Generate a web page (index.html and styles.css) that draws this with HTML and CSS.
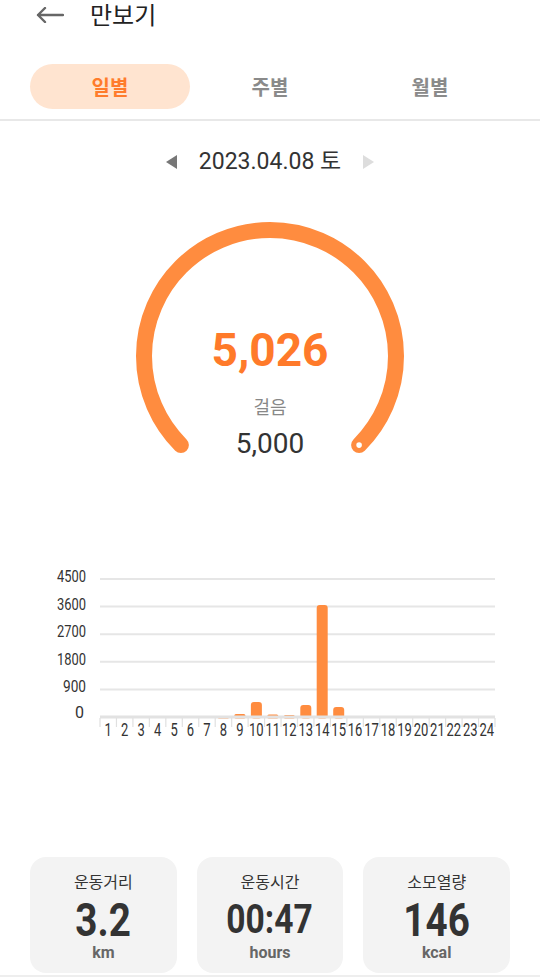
FILE: index.html
```html
<!DOCTYPE html>
<html lang="ko">
<head>
    <meta charset="UTF-8">
    <meta name="viewport" content="width=device-width, initial-scale=1.0">
    <title>만보기</title>
    <link rel="stylesheet" href="styles.css">
</head>
<body>
    <div class="header">
        <svg class="backIcon" width="28" height="16" viewBox="0 0 28 16">
            <path d="M27 8 H2 M9 1 L2 8 L9 15" fill="none" stroke="#666" stroke-width="2.4" stroke-linecap="round" stroke-linejoin="round"/>
        </svg>
        <div class="headerTitle">만보기</div>
    </div>

    <div class="tabBar">
        <div class="tab active">일별</div>
        <div class="tab">주별</div>
        <div class="tab">월별</div>
    </div>

    <div class="dateRow">
        <svg class="arrow" width="12" height="14" viewBox="0 0 12 14"><path d="M11 0 L0 7 L11 14 Z" fill="#777"/></svg>
        <div class="dateText">2023.04.08 토</div>
        <svg class="arrow" width="12" height="14" viewBox="0 0 12 14"><path d="M1 0 L12 7 L1 14 Z" fill="#ddd"/></svg>
    </div>

    <div class="gauge">
        <svg class="gaugeRing" width="280" height="240" viewBox="0 0 280 240">
            <path d="M50.9 231.1 A126 126 0 1 1 229.1 231.1" fill="none" stroke="#FF8C3F" stroke-width="16" stroke-linecap="round"/>
            <circle cx="229.1" cy="231.1" r="2.8" fill="#fff"/>
        </svg>
        <div class="gaugeValue">5,026</div>
        <div class="gaugeLabel">걸음</div>
        <div class="gaugeGoal">5,000</div>
    </div>

    <svg class="chart" width="540" height="180" viewBox="0 560 540 180">
        <!-- grid lines -->
        <g stroke="#e6e6e6" stroke-width="2">
            <line x1="100" y1="579" x2="495" y2="579"/>
            <line x1="100" y1="606.6" x2="495" y2="606.6"/>
            <line x1="100" y1="634.2" x2="495" y2="634.2"/>
            <line x1="100" y1="661.8" x2="495" y2="661.8"/>
            <line x1="100" y1="689.4" x2="495" y2="689.4"/>
        </g>
        <!-- y labels -->
        <g class="axisText" text-anchor="end" font-size="16">
            <text x="86" y="582" textLength="29" lengthAdjust="spacingAndGlyphs">4500</text>
            <text x="86" y="609.6" textLength="29" lengthAdjust="spacingAndGlyphs">3600</text>
            <text x="86" y="637.2" textLength="29" lengthAdjust="spacingAndGlyphs">2700</text>
            <text x="86" y="664.8" textLength="29" lengthAdjust="spacingAndGlyphs">1800</text>
            <text x="86" y="692.4" textLength="23" lengthAdjust="spacingAndGlyphs">900</text>
            <text x="84" y="718">0</text>
        </g>
        <!-- bars -->
        <g fill="#FF8C3F">
            <rect x="217.9" y="716" width="11" height="2.5" rx="1"/>
            <rect x="234.4" y="714" width="11" height="4.5" rx="1.5"/>
            <rect x="250.9" y="702" width="11" height="16.5" rx="3"/>
            <rect x="267.3" y="714.5" width="11" height="4" rx="1.5"/>
            <rect x="283.8" y="715" width="11" height="3.5" rx="1.5"/>
            <rect x="300.3" y="705" width="11" height="13.5" rx="3"/>
            <rect x="316.7" y="605" width="11" height="113.5" rx="3"/>
            <rect x="333.2" y="707" width="11" height="11.5" rx="3"/>
        </g>
        <!-- baseline and ticks -->
        <line x1="100" y1="717" x2="495" y2="717" stroke="#e2e2e2" stroke-width="3"/>
        <g id="ticks" stroke="#e0e0e0" stroke-width="1.2"></g>
        <g id="xLabels" class="axisText" text-anchor="middle" font-size="19"></g>
    </svg>

    <div class="cards">
        <div class="card">
            <div class="cardTitle">운동거리</div>
            <div class="cardValue"><span>3.2</span></div>
            <div class="cardUnit">km</div>
        </div>
        <div class="card">
            <div class="cardTitle">운동시간</div>
            <div class="cardValue small"><span>00:47</span></div>
            <div class="cardUnit">hours</div>
        </div>
        <div class="card">
            <div class="cardTitle">소모열량</div>
            <div class="cardValue"><span>146</span></div>
            <div class="cardUnit">kcal</div>
        </div>
    </div>
    <div class="bottomLine"></div>

    <script>
        // x axis: 24 hourly slots between x=100 and x=495
        const ns = 'http://www.w3.org/2000/svg';
        const ticks = document.getElementById('ticks');
        const labels = document.getElementById('xLabels');
        const slot = (495 - 100) / 24;
        for (let i = 0; i <= 24; i++) {
            const x = 100 + i * slot;
            const t = document.createElementNS(ns, 'line');
            t.setAttribute('x1', x); t.setAttribute('x2', x);
            t.setAttribute('y1', 718); t.setAttribute('y2', 727);
            ticks.appendChild(t);
            if (i < 24) {
                const txt = document.createElementNS(ns, 'text');
                const s = String(i + 1);
                txt.setAttribute('x', x + slot / 2);
                txt.setAttribute('y', 736);
                txt.setAttribute('textLength', 7.3 * s.length);
                txt.setAttribute('lengthAdjust', 'spacingAndGlyphs');
                txt.textContent = s;
                labels.appendChild(txt);
            }
        }
    </script>
</body>
</html>
```

FILE: styles.css
```css
body {
    margin: 0;
    width: 540px;
    background-color: #fff;
    overflow: hidden;
    font-family: Roboto, "Noto Sans CJK KR", sans-serif;
    color: #333;
}

.header {
    height: 30px;
    display: flex;
    align-items: center;
    padding-left: 36px;
    gap: 26px;
}

.backIcon {
    display: block;
}

.headerTitle {
    margin-top: -3px;
    font-family: "Noto Sans CJK KR", sans-serif;
    font-size: 24px;
    line-height: 30px;
    color: #222;
}

.tabBar {
    display: grid;
    grid-template-columns: repeat(3, 1fr);
    padding: 34px 30px 10px;
    border-bottom: 2px solid #e8e8e8;
}

.tab {
    height: 45px;
    border-radius: 23px;
    display: flex;
    align-items: center;
    justify-content: center;
    font-family: "Noto Sans CJK KR", sans-serif;
    font-size: 20px;
    font-weight: 700;
    color: #8a8a8a;
}

.tab.active {
    background-color: #FFE4D0;
    color: #FF7C2C;
}

.dateRow {
    margin-top: 26px;
    height: 30px;
    display: flex;
    align-items: center;
    justify-content: center;
    gap: 21px;
}

.arrow {
    display: block;
}

.dateText {
    font-size: 23px;
    line-height: 30px;
    color: #333;
}

.gauge {
    position: relative;
    width: 280px;
    height: 240px;
    margin: 37px auto 0;
    text-align: center;
}

.gaugeRing {
    position: absolute;
    top: 0;
    left: 0;
}

.gaugeValue {
    position: relative;
    padding-top: 111px;
    font-size: 46px;
    font-weight: 700;
    line-height: 50px;
    color: #FF7A2A;
}

.gaugeLabel {
    position: relative;
    margin-top: 19px;
    font-family: "Noto Sans CJK KR", sans-serif;
    font-size: 18px;
    line-height: 24px;
    color: #888;
}

.gaugeGoal {
    position: relative;
    margin-top: 10px;
    font-size: 28px;
    line-height: 32px;
    color: #333;
}

.chart {
    display: block;
    margin-top: 106px;
}

.axisText {
    font-family: Roboto, sans-serif;
    fill: #333;
}

.cards {
    margin-top: 117px;
    padding: 0 30px;
    display: grid;
    grid-template-columns: repeat(3, 1fr);
    gap: 20px;
}

.card {
    height: 116px;
    border-radius: 16px;
    background-color: #f3f3f3;
    text-align: center;
    padding-top: 14px;
    box-sizing: border-box;
}

.cardTitle {
    font-family: "Noto Sans CJK KR", sans-serif;
    font-size: 16px;
    line-height: 20px;
    color: #333;
}

.cardValue {
    margin-top: 9px;
    height: 40px;
    font-size: 46px;
    font-weight: 700;
    line-height: 40px;
    color: #333;
}

.cardValue span {
    display: inline-block;
    transform: scaleX(0.84);
}

.cardValue.small {
    font-size: 40px;
}

.cardUnit {
    margin-top: 3px;
    font-size: 16px;
    font-weight: 700;
    line-height: 20px;
    color: #666;
}

.bottomLine {
    margin-top: 2px;
    border-top: 2px solid #eee;
}
```
